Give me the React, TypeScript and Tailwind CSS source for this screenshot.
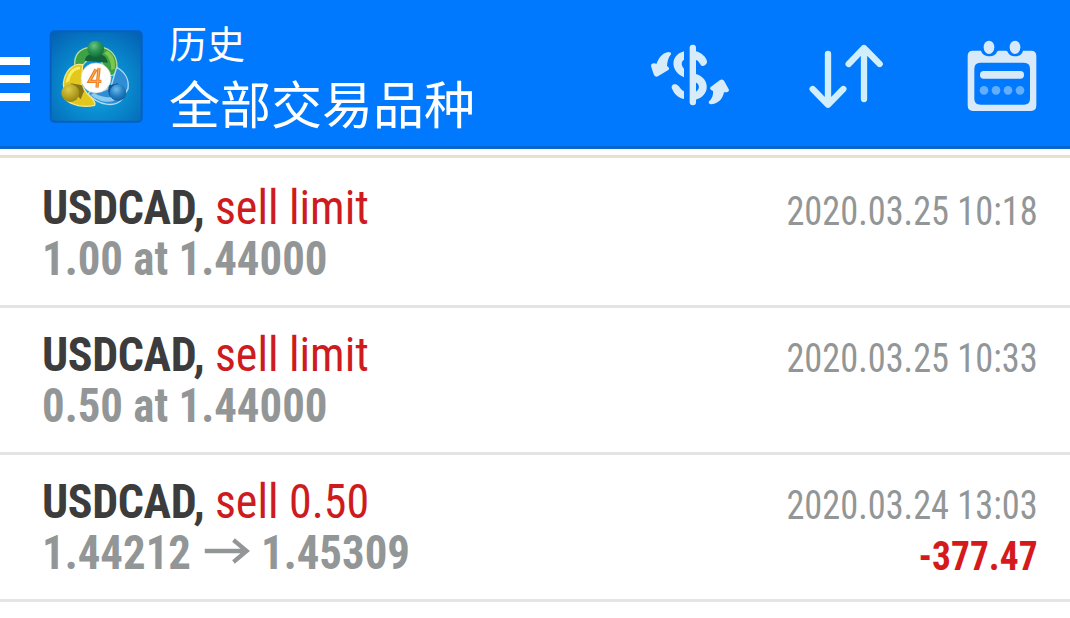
import type { ReactNode } from 'react'

interface HistoryItem {
  symbol: string
  type: string
  from: string
  to?: string
  time: string
  profit?: string
}

const items: HistoryItem[] = [
  { symbol: 'USDCAD', type: 'sell limit', from: '1.00 at 1.44000', time: '2020.03.25 10:18' },
  { symbol: 'USDCAD', type: 'sell limit', from: '0.50 at 1.44000', time: '2020.03.25 10:33' },
  { symbol: 'USDCAD', type: 'sell 0.50', from: '1.44212', to: '1.45309', time: '2020.03.24 13:03', profit: '-377.47' },
]

function MenuIcon() {
  return (
    <svg viewBox="0 0 30 46" className="w-[30px] h-[46px] shrink-0" fill="#fff">
      <rect x="0" y="1" width="30" height="8" />
      <rect x="0" y="19" width="30" height="8" />
      <rect x="0" y="37" width="30" height="8" />
    </svg>
  )
}

// drawn on a 3x grid
function AppLogo() {
  return (
    <svg viewBox="147 27 285 285" className="w-[95px] h-[95px] shrink-0">
      <defs>
        <radialGradient id="tile" cx="0.5" cy="0.6" r="0.75">
          <stop offset="0" stopColor="#14abe2" />
          <stop offset="0.5" stopColor="#0888cd" />
          <stop offset="1" stopColor="#0462b4" />
        </radialGradient>
        <radialGradient id="green" cx="0.4" cy="0.3" r="0.8">
          <stop offset="0" stopColor="#6cc486" />
          <stop offset="0.45" stopColor="#2a9555" />
          <stop offset="1" stopColor="#0b6530" />
        </radialGradient>
        <radialGradient id="yellow" cx="0.4" cy="0.3" r="0.8">
          <stop offset="0" stopColor="#dccc50" />
          <stop offset="0.5" stopColor="#b8a520" />
          <stop offset="1" stopColor="#8a7c14" />
        </radialGradient>
        <radialGradient id="blue" cx="0.4" cy="0.3" r="0.8">
          <stop offset="0" stopColor="#6cbcea" />
          <stop offset="0.5" stopColor="#2580c4" />
          <stop offset="1" stopColor="#0f5496" />
        </radialGradient>
      </defs>
      <rect x="149" y="31" width="279" height="277" rx="14" fill="#0560bd" />
      <rect x="155" y="37" width="267" height="265" rx="8" fill="url(#tile)" />
      <path d="M225 140C220 106 238 84 272 82H302C332 84 352 108 351 142C350 158 340 170 328 166L300 120H262L248 136C240 146 228 148 225 140Z" fill="#3da246" stroke="#b9dd98" strokeWidth="4" />
      <path d="M254 122C258 104 270 98 288 110C304 98 318 106 324 128Z" fill="#15633a" />
      <path d="M322 92C340 104 348 122 344 146L334 150C334 126 326 108 312 100Z" fill="#7cc64e" />
      <path d="M350 142C376 156 388 180 384 206L366 238C344 264 296 256 264 222L276 208C300 218 322 212 334 196Z" fill="#2f8dd6" stroke="#b0dcf3" strokeWidth="4" />
      <path d="M328 196L354 190L360 206L338 240C328 230 320 214 328 196Z" fill="#12538f" />
      <path d="M272 224C294 244 322 250 344 242L334 232C314 232 296 228 282 218Z" fill="#8acbf0" />
      <path d="M248 134C218 128 194 154 190 192L196 238C214 256 252 264 284 256C288 246 278 236 262 222L244 194Z" fill="#e3c71d" stroke="#efe68e" strokeWidth="4" />
      <path d="M212 190L246 196L252 214L242 238L228 222Z" fill="#857417" />
      <path d="M240 140C216 140 202 160 197 188L208 184C212 164 222 150 240 148Z" fill="#f8ee62" />
      <circle cx="287" cy="87" r="25" fill="url(#green)" />
      <circle cx="211" cy="219" r="27" fill="url(#yellow)" />
      <circle cx="354" cy="218" r="25" fill="url(#blue)" />
      <circle cx="288" cy="174" r="45" fill="#fff" stroke="#d5d3c8" strokeWidth="2" />
      <path d="M288 148L268 184H304M297 144L291 203" fill="none" stroke="#ee8128" strokeWidth="10" />
      <path d="M288 148L268 184H304M297 144L291 203" fill="none" stroke="#fbb45c" strokeWidth="3" />
    </svg>
  )
}

function CurrencyIcon() {
  return (
    <svg viewBox="0 0 300 270" className="w-[100px] h-[90px]" fill="#d8ebf8">
      <path d="M84 66Q95 66 93 73C84 84 82 96 81 108Q91 114 85 120L55 138Q45 144 41 133L33 108Q33 97 50 101C56 84 66 70 84 66Z" />
      <path d="M132 64V89C123 94 123 107 132 116V142C92 126 88 76 132 64Z" />
      <path d="M108 163C97 160 92 169 97 178C103 193 115 204 132 207V184C122 180 119 168 108 163Z" />
      <rect x="149" y="44" width="19" height="182" rx="9" />
      <path d="M167 64C184 67 199 82 201 94C202 104 188 114 182 104C177 96 174 91 167 89Z" />
      <path d="M167 132C211 143 212 198 167 209V186C180 178 180 164 167 157Z" />
      <path d="M240 150Q249 146 253 154L267 179Q267 188 252 187C248 207 234 222 212 223Q204 221 207 214C218 205 220 192 219 183Q205 176 213 170Z" />
    </svg>
  )
}

function SortIcon() {
  return (
    <svg viewBox="0 0 300 270" className="w-[100px] h-[90px]" fill="none" stroke="#d0effb" strokeWidth="19" strokeLinecap="round" strokeLinejoin="round">
      <path d="M84 72V222M38 177L84 224L130 177" />
      <path d="M192 207V56M146 102L192 54L239 102" />
    </svg>
  )
}

function CalendarIcon() {
  return (
    <svg viewBox="0 0 300 270" className="w-[100px] h-[90px]">
      <path
        fillRule="evenodd"
        fill="#d8eafa"
        d="M54 62H78C84 84 120 84 126 65Q128 62 132 62H152Q156 62 158 65C164 84 200 84 204 62H228Q244 62 244 78V226Q244 243 228 243H54Q38 243 38 226V78Q38 62 54 62ZM76 98Q58 98 58 116V207Q58 224 76 224H207Q225 224 225 207V116Q225 98 207 98Z"
      />
      <ellipse cx="102" cy="52" rx="16" ry="20" fill="#d8eafa" />
      <ellipse cx="180" cy="52" rx="16" ry="20" fill="#d8eafa" />
      <rect x="75" y="123" width="132" height="23" rx="11" fill="#d8eafa" />
      <g fill="#62aefb">
        <circle cx="87" cy="181" r="13" />
        <circle cx="123" cy="181" r="13" />
        <circle cx="159" cy="181" r="13" />
        <circle cx="195" cy="181" r="13" />
      </g>
    </svg>
  )
}

function ArrowIcon() {
  return (
    <svg viewBox="0 0 49 28" className="w-[49px] h-[28px] ml-[14px] mr-[12px] mb-[4px]" fill="none" stroke="#929696" strokeWidth="4.5">
      <path d="M0 14H46M31 3L45 14L31 25" />
    </svg>
  )
}

function IconButton({ label, children }: { label: string, children: ReactNode }) {
  return <button aria-label={label} className="block">{children}</button>
}

function HistoryRow({ item }: { item: HistoryItem }) {
  return (
    <li className="flex h-[147px] justify-between border-b-[3px] border-[#e4e4e4] pt-[21px] pl-[42px] pr-[32px]">
      <div className="text-[48px] leading-[51px] whitespace-nowrap">
        <div className="origin-left scale-x-[0.957]">
          <span className="font-bold tracking-[-0.4px] text-[#3c3c3c]">
            {item.symbol}
            ,
          </span>
          {' '}
          <span className="text-[#ce1b20]">{item.type}</span>
        </div>
        <div className="flex origin-left scale-x-[0.934] items-center font-bold text-[#929696]">
          {item.from}
          {item.to && (
            <>
              <ArrowIcon />
              {item.to}
            </>
          )}
        </div>
      </div>
      <div className="text-right text-[40px] leading-[51px] pt-[4px] whitespace-nowrap">
        <div className="origin-right scale-x-[0.908] text-[#929696]">{item.time}</div>
        {item.profit && <div className="origin-right scale-x-[0.936] font-bold text-[#d41a1d]">{item.profit}</div>}
      </div>
    </li>
  )
}

export default function App() {
  return (
    <div className="h-[618px] w-[1070px] overflow-hidden bg-white font-['Roboto_Condensed',Roboto,'Noto_Sans_CJK_SC',sans-serif] [font-stretch:75%]">
      <header className="flex h-[149px] border-b-[3px] border-[#0667d2] bg-[#0079ff] text-white">
        <div className="flex pt-[29px]">
          <button aria-label="菜单" className="h-[46px] mt-[27px]"><MenuIcon /></button>
          <div className="ml-[19px]"><AppLogo /></div>
        </div>
        <div className="ml-[25px] flex-1 pt-[14px] font-['Noto_Sans_CJK_SC',sans-serif] font-normal">
          <div className="text-[38px] leading-[56px]">历史</div>
          <div className="text-[51px] leading-[64px]">全部交易品种</div>
        </div>
        <div className="flex items-start pt-[30px] pr-[15px]">
          <IconButton label="货币"><CurrencyIcon /></IconButton>
          <div className="ml-[60px] mr-[55px]">
            <IconButton label="排序"><SortIcon /></IconButton>
          </div>
          <IconButton label="日期"><CalendarIcon /></IconButton>
        </div>
      </header>
      <div className="mt-[6px] h-[3px] bg-[#e5e3cf]" />
      <ul className="pt-[3px]">
        {items.map(item => <HistoryRow key={item.time} item={item} />)}
      </ul>
    </div>
  )
}
